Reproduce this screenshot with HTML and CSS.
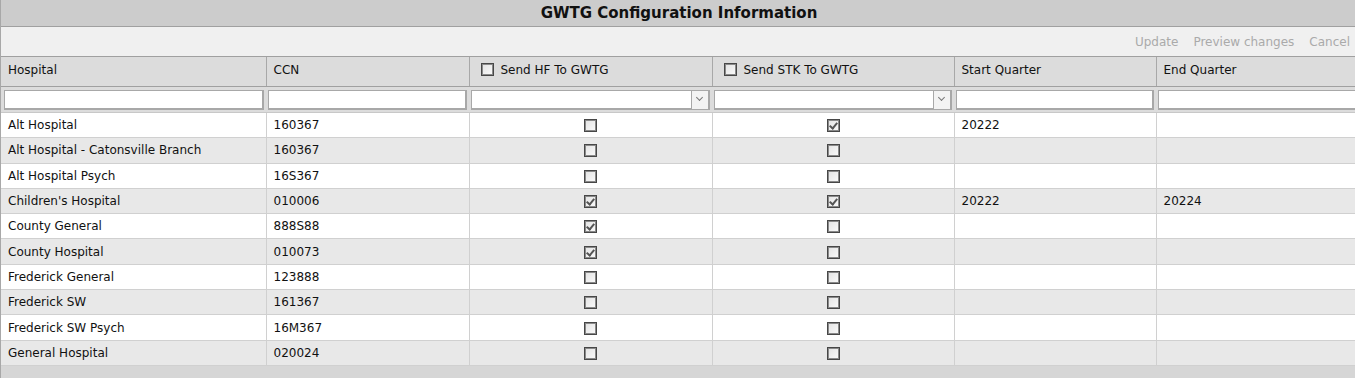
FILE: index.html
```html
<!DOCTYPE html>
<html lang="en">
<head>
    <meta charset="UTF-8">
    <title>GWTG Configuration Information</title>
    <link rel="stylesheet" href="styles.css">
</head>
<body>
    <div class="grid">
        <div class="grid-title">GWTG Configuration Information</div>
        <div class="toolbar">
            <span class="tool-btn">Update</span>
            <span class="tool-btn">Preview changes</span>
            <span class="tool-btn">Cancel</span>
        </div>
        <table class="data">
            <colgroup>
                <col class="c-hosp">
                <col class="c-ccn">
                <col class="c-hf">
                <col class="c-stk">
                <col class="c-start">
                <col class="c-end">
            </colgroup>
            <thead>
                <tr class="head">
                    <th>Hospital</th>
                    <th>CCN</th>
                    <th><span class="check"></span>Send HF To GWTG</th>
                    <th><span class="check"></span>Send STK To GWTG</th>
                    <th>Start Quarter</th>
                    <th>End Quarter</th>
                </tr>
                <tr class="filters">
                    <td><div class="filter-box"></div></td>
                    <td><div class="filter-box"></div></td>
                    <td><div class="filter-box select"><span class="arrow"></span></div></td>
                    <td><div class="filter-box select"><span class="arrow"></span></div></td>
                    <td><div class="filter-box"></div></td>
                    <td><div class="filter-box"></div></td>
                </tr>
            </thead>
            <tbody>
                <tr>
                    <td>Alt Hospital</td><td>160367</td>
                    <td class="mid"><span class="check"></span></td>
                    <td class="mid"><span class="check on"></span></td>
                    <td>20222</td><td></td>
                </tr>
                <tr>
                    <td>Alt Hospital - Catonsville Branch</td><td>160367</td>
                    <td class="mid"><span class="check"></span></td>
                    <td class="mid"><span class="check"></span></td>
                    <td></td><td></td>
                </tr>
                <tr>
                    <td>Alt Hospital Psych</td><td>16S367</td>
                    <td class="mid"><span class="check"></span></td>
                    <td class="mid"><span class="check"></span></td>
                    <td></td><td></td>
                </tr>
                <tr>
                    <td>Children's Hospital</td><td>010006</td>
                    <td class="mid"><span class="check on"></span></td>
                    <td class="mid"><span class="check on"></span></td>
                    <td>20222</td><td>20224</td>
                </tr>
                <tr>
                    <td>County General</td><td>888S88</td>
                    <td class="mid"><span class="check on"></span></td>
                    <td class="mid"><span class="check"></span></td>
                    <td></td><td></td>
                </tr>
                <tr>
                    <td>County Hospital</td><td>010073</td>
                    <td class="mid"><span class="check on"></span></td>
                    <td class="mid"><span class="check"></span></td>
                    <td></td><td></td>
                </tr>
                <tr>
                    <td>Frederick General</td><td>123888</td>
                    <td class="mid"><span class="check"></span></td>
                    <td class="mid"><span class="check"></span></td>
                    <td></td><td></td>
                </tr>
                <tr>
                    <td>Frederick SW</td><td>161367</td>
                    <td class="mid"><span class="check"></span></td>
                    <td class="mid"><span class="check"></span></td>
                    <td></td><td></td>
                </tr>
                <tr>
                    <td>Frederick SW Psych</td><td>16M367</td>
                    <td class="mid"><span class="check"></span></td>
                    <td class="mid"><span class="check"></span></td>
                    <td></td><td></td>
                </tr>
                <tr>
                    <td>General Hospital</td><td>020024</td>
                    <td class="mid"><span class="check"></span></td>
                    <td class="mid"><span class="check"></span></td>
                    <td></td><td></td>
                </tr>
            </tbody>
        </table>
        <div class="grid-footer"></div>
    </div>
</body>
</html>
```

FILE: styles.css
```css
body {
    margin: 0;
    font-family: 'DejaVu Sans', Verdana, sans-serif;
    font-size: 12px;
    color: #111;
    background: #fff;
    overflow: hidden;
}

.grid {
    width: 1360px;
    border-left: 1px solid #a8a8a8;
}

.grid-title {
    height: 26px;
    line-height: 26px;
    background: #cccccc;
    border-bottom: 1px solid #a0a0a0;
    text-align: center;
    font-weight: bold;
    font-size: 15px;
    padding-right: 4px;
}

.toolbar {
    height: 29px;
    background: #f0f0f0;
    border-bottom: 1px solid #a0a0a0;
    display: flex;
    justify-content: flex-end;
    align-items: center;
    gap: 15px;
    padding-right: 11px;
}

.tool-btn {
    color: #aaa;
}

.data {
    border-collapse: collapse;
    table-layout: fixed;
    width: 1359px;
}

.c-hosp { width: 265px; }
.c-ccn { width: 203px; }
.c-hf { width: 243px; }
.c-stk { width: 242px; }
.c-start { width: 202px; }
.c-end { width: 204px; }

.data th,
.data td {
    padding: 0 0 0 7px;
    text-align: left;
    font-weight: normal;
    white-space: nowrap;
    overflow: hidden;
}

.head th {
    height: 26px;
    padding-bottom: 3px;
    background: #dcdcdc;
    border-left: 1px solid #a8a8a8;
    border-bottom: 1px solid #a0a0a0;
}

.head th:first-child,
.filters td:first-child,
.data tbody td:first-child {
    border-left: none;
}

.head .check {
    margin: 0 7px 0 4px;
    vertical-align: -2px;
}

.filters td {
    height: 25px;
    padding: 0 2px 0 2px;
    background: #dcdcdc;
}

.filter-box {
    height: 17px;
    background: #fff;
    border: 1px solid #a8a8a8;
    border-width: 1px 2px 2px 1px;
    position: relative;
}

.filters td:first-child .filter-box {
    margin-left: 1px;
}

.select .arrow {
    position: absolute;
    right: -1px;
    top: -1px;
    width: 16px;
    height: 18px;
    border: 1px solid #a8a8a8;
    background: #f3f3f3;
}

.select .arrow::after {
    content: "";
    position: absolute;
    left: 5px;
    top: 4px;
    width: 4px;
    height: 4px;
    border-right: 1px solid #777;
    border-bottom: 1px solid #777;
    transform: rotate(45deg);
}

.data tbody tr {
    height: 25.3px;
}

.data tbody td {
    height: 24.3px;
    border-left: 1px solid #d0d0d0;
    border-top: 1px solid #d0d0d0;
    background: #fff;
}

.data tbody tr:first-child td {
    border-top: 1px solid #c8c8c8;
}

.data tbody tr:nth-child(even) td {
    background: #e8e8e8;
}

.data tbody td.mid {
    text-align: center;
    padding-left: 0;
}

.data tbody tr:last-child td {
    border-bottom: 1px solid #d0d0d0;
}

.check {
    display: inline-block;
    width: 11px;
    height: 11px;
    border: 1px solid #474747;
    box-shadow: inset 0 0 0 1px #8a8a8a;
    background: linear-gradient(135deg, #e2e2e2, #fbfbfb);
    vertical-align: middle;
    position: relative;
}

.check.on::after {
    content: "";
    position: absolute;
    left: 3px;
    top: 1px;
    width: 3px;
    height: 6px;
    border-right: 2px solid #555;
    border-bottom: 2px solid #555;
    transform: rotate(40deg);
}

.grid-footer {
    height: 20px;
    background: #d6d6d6;
}
```
